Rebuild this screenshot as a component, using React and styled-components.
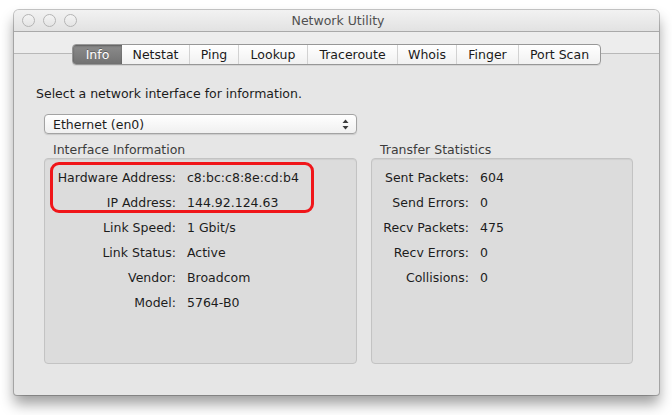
import React from 'react';
import styled, { createGlobalStyle } from 'styled-components';

const GlobalStyle = createGlobalStyle`
  html, body {
    margin: 0;
    padding: 0;
    background: #ffffff;
  }
  body {
    font-family: "DejaVu Sans", "Liberation Sans", sans-serif;
    font-size: 12.5px;
    color: #1c1c1c;
  }
`;

const Page = styled.div`
  width: 672px;
  height: 415px;
  padding: 10px 0 0 14px;
  box-sizing: border-box;
`;

const Window = styled.div`
  width: 645px;
  height: 385px;
  display: flex;
  flex-direction: column;
  border-radius: 5px 5px 3px 3px;
  overflow: hidden;
  background: #e6e6e6;
  box-shadow: 0 0 0 1px rgba(0, 0, 0, 0.22), 0 9px 14px rgba(0, 0, 0, 0.38);
`;

const TitleBar = styled.div`
  height: 21px;
  flex: none;
  display: flex;
  align-items: center;
  position: relative;
  padding-left: 8px;
  background: linear-gradient(to bottom, #f2f2f2, #e2e2e2);
  border-bottom: 1px solid #a9a9a9;
`;

const Lights = styled.div`
  display: flex;
  gap: 8px;
`;

const Light = styled.span`
  width: 11px;
  height: 11px;
  border-radius: 50%;
  border: 1px solid #b4b4b4;
  background: linear-gradient(to bottom, #f4f4f4, #e4e4e4);
`;

const Title = styled.div`
  flex: 1;
  text-align: center;
  margin-right: 60px;
  font-size: 12.5px;
  color: #505050;
`;

const TabRow = styled.div`
  flex: none;
  display: flex;
  justify-content: center;
  padding-top: 12px;
  background: linear-gradient(
    to bottom,
    #ededed 0,
    #ededed 21px,
    #b8b8b8 21px,
    #b8b8b8 22px,
    #e6e6e6 22px
  );
`;

const Segmented = styled.div`
  display: flex;
  height: 19px;
  border: 1px solid #979797;
  border-radius: 4px;
  overflow: hidden;
  background: linear-gradient(to bottom, #ffffff, #f1f1f1);
  box-shadow: 0 1px 0 rgba(0, 0, 0, 0.08);
`;

const Tab = styled.div`
  width: ${p => p.$w}px;
  box-sizing: border-box;
  display: flex;
  align-items: center;
  justify-content: center;
  font-size: 12.5px;
  color: ${p => (p.$active ? '#ffffff' : '#1a1a1a')};
  background: ${p =>
    p.$active ? 'linear-gradient(to bottom, #8c8c8c, #727272)' : 'transparent'};
  box-shadow: ${p => (p.$active ? 'inset 0 1px 2px rgba(0,0,0,0.35)' : 'none')};
  text-shadow: ${p => (p.$active ? '0 -1px 0 rgba(0,0,0,0.3)' : 'none')};
  border-left: ${p => (p.$sep ? '1px solid #d2d2d2' : 'none')};
`;

const Pane = styled.div`
  flex: 1;
  display: flex;
  flex-direction: column;
  padding: 21px 26px 0 22px;
`;

const Prompt = styled.div`
  line-height: 16px;
  height: 16px;
`;

const Popup = styled.div`
  margin: 12px 0 0 8px;
  width: 313px;
  height: 20px;
  box-sizing: border-box;
  display: flex;
  align-items: center;
  justify-content: space-between;
  padding: 0 7px 0 8px;
  border: 1px solid #a3a3a3;
  border-radius: 4px;
  background: linear-gradient(to bottom, #ffffff, #f0f0f0);
  box-shadow: 0 1px 1px rgba(0, 0, 0, 0.12);
`;

const Arrows = styled.svg`
  width: 7px;
  height: 11px;
`;

const Groups = styled.div`
  display: flex;
  gap: 14px;
  margin: 8px 0 0 8px;
`;

const Group = styled.div`
  display: flex;
  flex-direction: column;
  width: ${p => p.$w}px;
`;

const GroupLabel = styled.div`
  line-height: 16px;
  padding-left: 9px;
  color: #3c3c3c;
`;

const Box = styled.div`
  position: relative;
  height: 206px;
  box-sizing: border-box;
  border: 1px solid #c3c3c3;
  border-radius: 4px;
  background: #dcdcdc;
  box-shadow: inset 0 1px 1px rgba(0, 0, 0, 0.06);
  padding-top: 6px;
`;

const Rows = styled.div`
  display: grid;
  grid-template-columns: ${p => p.$label}px auto;
  column-gap: 11px;
  grid-auto-rows: 25px;
  align-items: center;
`;

const Label = styled.div`
  text-align: right;
  white-space: nowrap;
  color: #1c1c1c;
`;

const Value = styled.div`
  white-space: nowrap;
  color: #1c1c1c;
`;

const Highlight = styled.div`
  position: absolute;
  left: 5px;
  top: 3px;
  width: 264px;
  height: 51px;
  box-sizing: border-box;
  border: 3px solid #f0161a;
  border-radius: 9px;
  pointer-events: none;
`;

const tabs = [
  ['Info', 49],
  ['Netstat', 67],
  ['Ping', 49],
  ['Lookup', 69],
  ['Traceroute', 90],
  ['Whois', 59],
  ['Finger', 62],
  ['Port Scan', 82],
];

const info = [
  ['Hardware Address:', 'c8:bc:c8:8e:cd:b4'],
  ['IP Address:', '144.92.124.63'],
  ['Link Speed:', '1 Gbit/s'],
  ['Link Status:', 'Active'],
  ['Vendor:', 'Broadcom'],
  ['Model:', '5764-B0'],
];

const stats = [
  ['Sent Packets:', '604'],
  ['Send Errors:', '0'],
  ['Recv Packets:', '475'],
  ['Recv Errors:', '0'],
  ['Collisions:', '0'],
];

const StatRows = ({ items, label }) => (
  <Rows $label={label}>
    {items.map(([k, v]) => (
      <React.Fragment key={k}>
        <Label>{k}</Label>
        <Value>{v}</Value>
      </React.Fragment>
    ))}
  </Rows>
);

export default function App() {
  return (
    <Page>
      <GlobalStyle />
      <Window>
        <TitleBar>
          <Lights>
            <Light />
            <Light />
            <Light />
          </Lights>
          <Title>Network Utility</Title>
        </TitleBar>
        <TabRow>
          <Segmented>
            {tabs.map(([name, w], i) => (
              <Tab key={name} $w={w} $active={i === 0} $sep={i > 1}>
                {name}
              </Tab>
            ))}
          </Segmented>
        </TabRow>
        <Pane>
          <Prompt>Select a network interface for information.</Prompt>
          <Popup>
            <span>Ethernet (en0)</span>
            <Arrows viewBox="0 0 7 11">
              <path d="M3.5 0.5 L6.5 4 L0.5 4 Z" fill="#3a3a3a" />
              <path d="M3.5 10.5 L6.5 7 L0.5 7 Z" fill="#3a3a3a" />
            </Arrows>
          </Popup>
          <Groups>
            <Group $w={313}>
              <GroupLabel>Interface Information</GroupLabel>
              <Box>
                <StatRows items={info} label={131} />
                <Highlight />
              </Box>
            </Group>
            <Group $w={262}>
              <GroupLabel>Transfer Statistics</GroupLabel>
              <Box>
                <StatRows items={stats} label={97} />
              </Box>
            </Group>
          </Groups>
        </Pane>
      </Window>
    </Page>
  );
}
